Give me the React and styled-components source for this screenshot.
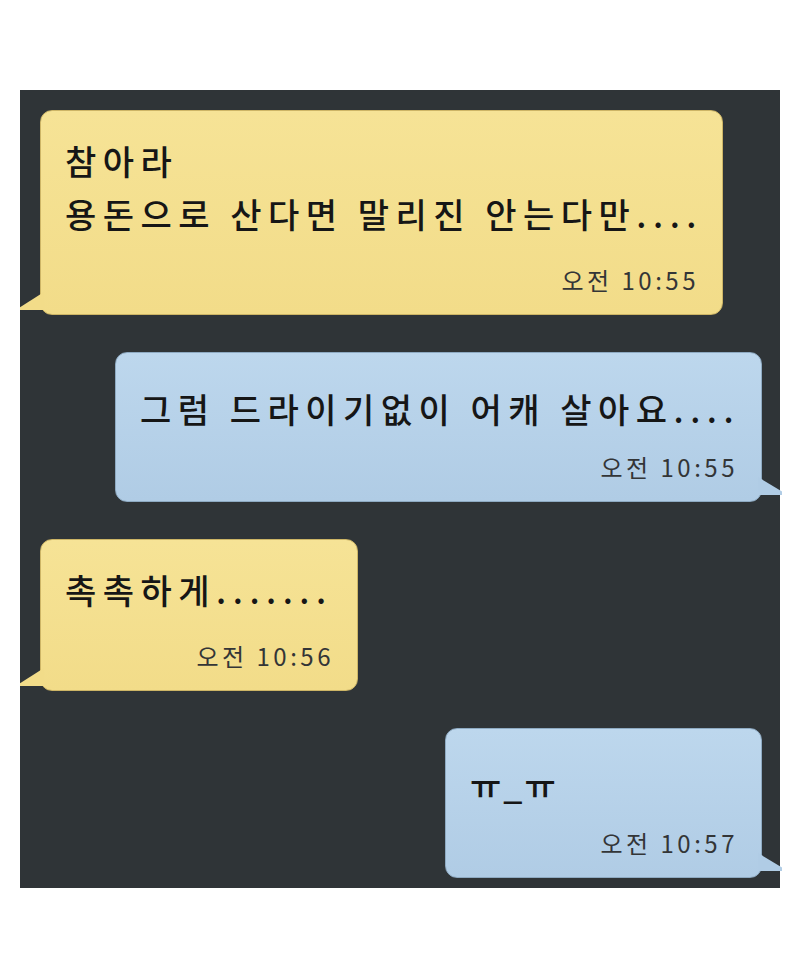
import React from 'react';
import styled, { createGlobalStyle, css } from 'styled-components';

const GlobalStyle = createGlobalStyle`
  html, body {
    margin: 0;
    padding: 0;
    background: #ffffff;
  }
  body {
    font-family: "Noto Sans CJK KR", "Noto Sans", sans-serif;
  }
`;

const Page = styled.div`
  width: 800px;
  height: 979px;
  padding-top: 90px;
  box-sizing: border-box;
`;

const Chat = styled.div`
  margin-left: 20px;
  width: 760px;
  height: 798px;
  background: #2f3437;
  box-sizing: border-box;
  padding: 20px 18px 10px 20px;
  display: flex;
  flex-direction: column;
  gap: 37px;
`;

const yellow = css`
  align-self: flex-start;
  background: linear-gradient(#f6e396, #f2dc89);
  border: 1px solid #cdb566;
  padding: 23px 26px 19px 24px;

  &::after {
    left: -21px;
    bottom: 4px;
    background: #f2dc89;
    clip-path: polygon(100% 0, 0 85%, 0 100%, 100% 100%);
  }
`;

const blue = css`
  align-self: flex-end;
  background: linear-gradient(#bdd7ed, #b0cce5);
  border: 1px solid #8eaac2;
  padding: 29px 26px 19px 24px;

  &::after {
    right: -21px;
    bottom: 6px;
    background: #b0cce5;
    clip-path: polygon(0 0, 100% 80%, 100% 100%, 0 100%);
  }
`;

const Bubble = styled.div`
  position: relative;
  box-sizing: border-box;
  width: ${(p) => p.$w}px;
  border-radius: 12px;
  display: flex;
  flex-direction: column;

  &::after {
    content: '';
    position: absolute;
    width: 24px;
    height: 18px;
  }

  ${(p) => (p.$side === 'left' ? yellow : blue)}
`;

const Text = styled.div`
  font-size: 34px;
  font-weight: 500;
  line-height: 53px;
  letter-spacing: ${(p) => p.$ls}px;
  color: #161616;
  white-space: pre;
`;

const Time = styled.div`
  align-self: flex-end;
  margin-top: ${(p) => (p.$side === 'left' ? 25 : 17)}px;
  font-size: 24px;
  line-height: 30px;
  color: #333537;
  letter-spacing: 3.5px;
  margin-right: -3px;
`;

const messages = [
  { side: 'left', w: 683, ls: 6.5, text: '참아라\n용돈으로 산다면 말리진 안는다만....', time: '오전 10:55' },
  { side: 'right', w: 647, ls: 6.5, text: '그럼 드라이기없이 어캐 살아요....', time: '오전 10:55' },
  { side: 'left', w: 318, ls: 6.5, text: '촉촉하게.......', time: '오전 10:56' },
  { side: 'right', w: 317, ls: 2, text: 'ㅠ_ㅠ', time: '오전 10:57' },
];

export default function App() {
  return (
    <Page>
      <GlobalStyle />
      <Chat>
        {messages.map((m, i) => (
          <Bubble key={i} $side={m.side} $w={m.w}>
            <Text $ls={m.ls}>{m.text}</Text>
            <Time $side={m.side}>{m.time}</Time>
          </Bubble>
        ))}
      </Chat>
    </Page>
  );
}
